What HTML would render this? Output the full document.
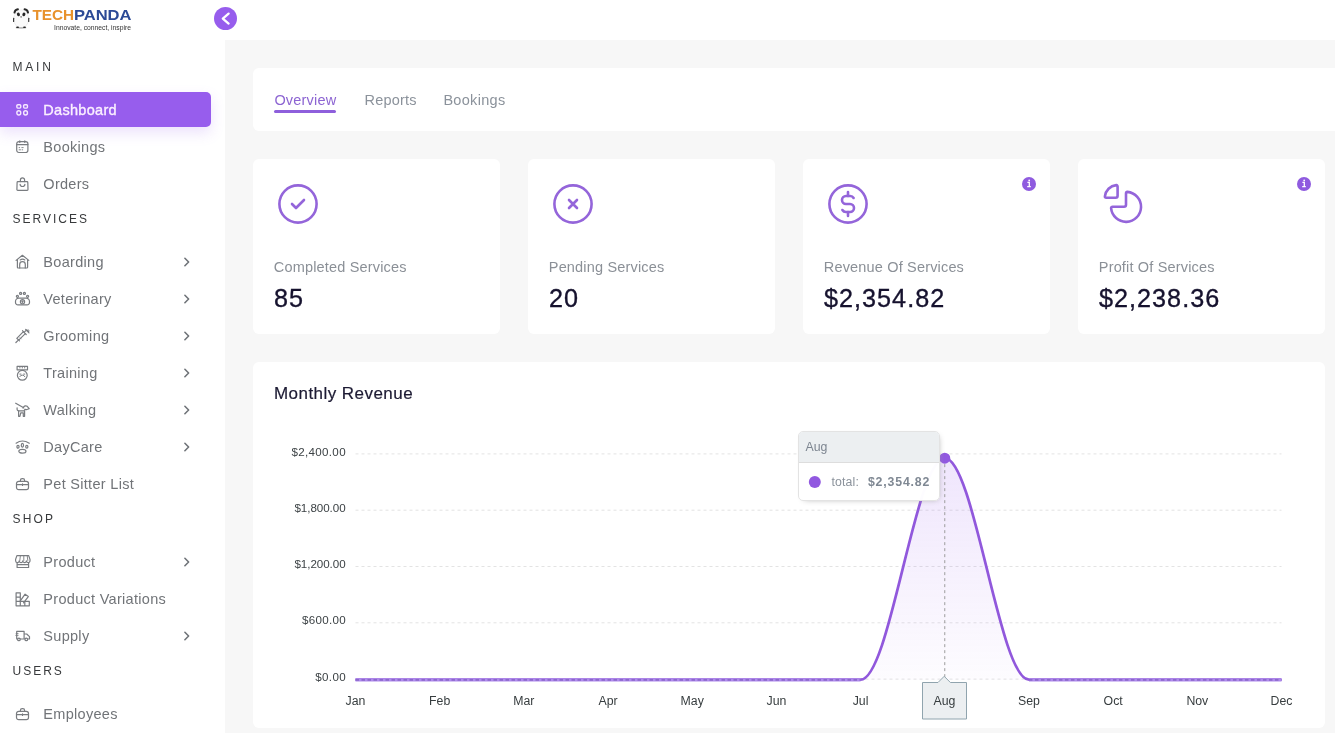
<!DOCTYPE html>
<html><head><meta charset="utf-8"><title>Dashboard</title><style>
*{margin:0;padding:0;box-sizing:border-box}
html,body{width:1335px;height:733px;overflow:hidden;background:#fff;font-family:"Liberation Sans", sans-serif}
.sidebar{position:absolute;left:0;top:0;width:225px;height:733px;background:#fff}
.topbar{position:absolute;left:225px;top:0;width:1110px;height:40px;background:#fff}
.main{position:absolute;left:225px;top:40px;width:1110px;height:693px;background:#f7f7f7}
.card{position:absolute;background:#fff;border-radius:6px}
.active{position:absolute;left:0;top:92px;width:211px;height:35px;background:#975ded;border-radius:0 5px 5px 0;box-shadow:0 6px 14px rgba(151,93,237,0.18)}
.toggle{position:absolute;left:214px;top:7px;width:23px;height:23px;border-radius:50%;background:#975ded}
svg.ov{position:absolute;left:0;top:0;width:1335px;height:733px;will-change:transform}
svg text{font-family:"Liberation Sans", sans-serif}
</style></head>
<body>
<div class="sidebar"></div>
<div class="topbar"></div>
<div class="main"></div>
<div class="card" style="left:253px;top:68px;width:1100px;height:63px"></div>
<div class="card" style="left:253px;top:159px;width:247px;height:175px"></div>
<div class="card" style="left:528px;top:159px;width:247px;height:175px"></div>
<div class="card" style="left:803px;top:159px;width:247px;height:175px"></div>
<div class="card" style="left:1078px;top:159px;width:247px;height:175px"></div>
<div class="card" style="left:253px;top:362px;width:1072px;height:366px"></div>
<div class="active"></div>
<div class="toggle"></div>
<svg class="ov" viewBox="0 0 1335 733"><text x="12.5" y="70.9" font-size="12" fill="#37393b" font-weight="400" letter-spacing="2.8" text-anchor="start" >MAIN</text><text x="12.5" y="222.9" font-size="12" fill="#37393b" font-weight="400" letter-spacing="2.0" text-anchor="start" >SERVICES</text><text x="12.5" y="523.2" font-size="12" fill="#37393b" font-weight="400" letter-spacing="2.2" text-anchor="start" >SHOP</text><text x="12.5" y="675.4" font-size="12" fill="#37393b" font-weight="400" letter-spacing="2.0" text-anchor="start" >USERS</text><text x="43.3" y="115" font-size="14.5" fill="#fbf0ff" font-weight="400" letter-spacing="0.3" text-anchor="start" stroke="#fbf0ff" stroke-width="0.35">Dashboard</text><g transform="translate(15.5,103)" fill="none" stroke="#f6e9ff" stroke-width="1.4" stroke-linecap="round" stroke-linejoin="round"><rect x="1.35" y="1.8" width="3.9" height="3.3" rx="1"/><rect x="8.15" y="1.8" width="3.8" height="3.3" rx="1"/><rect x="1.35" y="7.8" width="3.9" height="4.2" rx="1.95"/><rect x="8.15" y="7.8" width="3.8" height="4.2" rx="1.9"/></g><text x="43.3" y="152" font-size="14.5" fill="#717478" font-weight="400" letter-spacing="0.3" text-anchor="start" >Bookings</text><g transform="translate(15.5,140)" fill="none" stroke="#797c80" stroke-width="1.2" stroke-linecap="round" stroke-linejoin="round"><rect x="1.2" y="1.6" width="11.2" height="10.9" rx="2.2"/><path d="M1.2 4.6h11.2M4.3 0.8v1.6M9.3 0.8v1.6"/><path d="M3.6 7.6h0.6M6.3 7.6h1.4M3.6 9.8h1.4M6.6 9.8h0.6" stroke-width="0.9"/></g><text x="43.3" y="189" font-size="14.5" fill="#717478" font-weight="400" letter-spacing="0.3" text-anchor="start" >Orders</text><g transform="translate(15.5,177)" fill="none" stroke="#797c80" stroke-width="1.2" stroke-linecap="round" stroke-linejoin="round"><path d="M2.4 4.6h9.1a0.8 0.8 0 0 1 0.8 0.8l0.2 7.2a0.8 0.8 0 0 1 -0.8 0.8h-9.5a0.8 0.8 0 0 1 -0.8 -0.8l0.2 -7.2a0.8 0.8 0 0 1 0.8 -0.8z"/><path d="M4.9 4.6v-1.6a2.1 2.1 0 0 1 4.2 0v1.6M4.6 7.3a2.4 2.2 0 0 0 4.8 0"/></g><text x="43.3" y="267" font-size="14.5" fill="#717478" font-weight="400" letter-spacing="0.3" text-anchor="start" >Boarding</text><g transform="translate(15.5,255)" fill="none" stroke="#797c80" stroke-width="1.2" stroke-linecap="round" stroke-linejoin="round"><path d="M0.6 5.4l6.3-5.1l6.4 5.1M1.9 4.6v7.6a0.8 0.8 0 0 0 0.8 0.8h8.6a0.8 0.8 0 0 0 0.8-0.8v-7.6"/><path d="M4.2 12.9v-3.4a2.8 2.8 0 0 1 5.6 0v3.4"/><path d="M4.7 4.9a3.3 2 0 0 1 4.6 0"/></g><path d="M184.9 258.3l3.7 3.7l-3.7 3.7" fill="none" stroke="#6f7378" stroke-width="1.6" stroke-linecap="round" stroke-linejoin="round"/><text x="43.3" y="304" font-size="14.5" fill="#717478" font-weight="400" letter-spacing="0.3" text-anchor="start" >Veterinary</text><g transform="translate(15.5,292)" fill="none" stroke="#797c80" stroke-width="1.2" stroke-linecap="round" stroke-linejoin="round"><circle cx="5.1" cy="1.4" r="1.05"/><circle cx="8.9" cy="1.4" r="1.05"/><circle cx="1.9" cy="4.3" r="1.05"/><circle cx="12.1" cy="4.3" r="1.05"/><path d="M3.3 6.2h7.4a3.3 3.3 0 0 1 3.3 3.3v1a2.4 2.4 0 0 1 -2.4 2.4h-9.2a2.4 2.4 0 0 1 -2.4 -2.4v-1a3.3 3.3 0 0 1 3.3 -3.3z"/><circle cx="7" cy="9.7" r="2.1"/><path d="M7 8.8v1.8M6.1 9.7h1.8" stroke-width="0.9"/></g><path d="M184.9 295.3l3.7 3.7l-3.7 3.7" fill="none" stroke="#6f7378" stroke-width="1.6" stroke-linecap="round" stroke-linejoin="round"/><text x="43.3" y="341" font-size="14.5" fill="#717478" font-weight="400" letter-spacing="0.3" text-anchor="start" >Grooming</text><g transform="translate(15.5,329)" fill="none" stroke="#797c80" stroke-width="1.2" stroke-linecap="round" stroke-linejoin="round"><path d="M0.4 13.5l2.2-2.2M2.1 9.9l1.9 1.9M3.2 11.2l6.6-6.6l-1.9-1.9l-6.6 6.6z" /><path d="M7.9 2.6l-0.9-0.9M9.8 4.6l0.9 0.9M8.6 3.4l2.5-2.5M10.2 0.5l3.3 3.3M11.7 1.8l0.9-0.9M12.6 2.8l0.9-0.9"/><path d="M4.5 8.7l1.2 1.2" stroke-width="0.8"/></g><path d="M184.9 332.3l3.7 3.7l-3.7 3.7" fill="none" stroke="#6f7378" stroke-width="1.6" stroke-linecap="round" stroke-linejoin="round"/><text x="43.3" y="378" font-size="14.5" fill="#717478" font-weight="400" letter-spacing="0.3" text-anchor="start" >Training</text><g transform="translate(15.5,366)" fill="none" stroke="#797c80" stroke-width="1.2" stroke-linecap="round" stroke-linejoin="round"><path d="M1.6 0.4h10.4v3.4h-10.4z"/><path d="M4.4 0.4v1.6M6.8 0.4v1.6M9.2 0.4v1.6" stroke-width="0.9"/><circle cx="6.8" cy="9.3" r="4.9"/><path d="M4.3 10.6a2.6 2 0 0 1 5 0M4.3 8.1h1.2M8.1 8.1h1.2" stroke-width="1"/></g><path d="M184.9 369.3l3.7 3.7l-3.7 3.7" fill="none" stroke="#6f7378" stroke-width="1.6" stroke-linecap="round" stroke-linejoin="round"/><text x="43.3" y="415" font-size="14.5" fill="#717478" font-weight="400" letter-spacing="0.3" text-anchor="start" >Walking</text><g transform="translate(15.5,403)" fill="none" stroke="#797c80" stroke-width="1.2" stroke-linecap="round" stroke-linejoin="round"><path d="M0.2 0.2l8 4.6"/><path d="M1.6 4.8v1.5a1.5 1.5 0 0 0 1.5 1.5h5.4l1-1.6a2 2 0 0 0 1.9 0.3l2.3-0.8l-2-2.4a2.3 2.3 0 0 0 -3.3 0.4l-0.9 1.3"/><path d="M3.1 7.8v5.5h1.3l0.8-3.5h2.6v3.5h1.3v-5.5"/></g><path d="M184.9 406.3l3.7 3.7l-3.7 3.7" fill="none" stroke="#6f7378" stroke-width="1.6" stroke-linecap="round" stroke-linejoin="round"/><text x="43.3" y="452" font-size="14.5" fill="#717478" font-weight="400" letter-spacing="0.3" text-anchor="start" >DayCare</text><g transform="translate(15.5,440)" fill="none" stroke="#797c80" stroke-width="1.2" stroke-linecap="round" stroke-linejoin="round"><path d="M0.6 3.2q6.2-4.4 13.2 0"/><ellipse cx="6.9" cy="5.2" rx="1.1" ry="1.9"/><ellipse cx="2.5" cy="6.8" rx="1.1" ry="1.4"/><ellipse cx="11.3" cy="6.8" rx="1.1" ry="1.4"/><ellipse cx="6.9" cy="11.3" rx="3.6" ry="1.9"/></g><path d="M184.9 443.3l3.7 3.7l-3.7 3.7" fill="none" stroke="#6f7378" stroke-width="1.6" stroke-linecap="round" stroke-linejoin="round"/><text x="43.3" y="489" font-size="14.5" fill="#717478" font-weight="400" letter-spacing="0.3" text-anchor="start" >Pet Sitter List</text><g transform="translate(15.5,477)" fill="none" stroke="#797c80" stroke-width="1.2" stroke-linecap="round" stroke-linejoin="round"><path d="M3.2 4.4h7.6a2.2 2.2 0 0 1 2.2 2.2v3.9a2.2 2.2 0 0 1 -2.2 2.2h-7.6a2.2 2.2 0 0 1 -2.2 -2.2v-3.9a2.2 2.2 0 0 1 2.2 -2.2z"/><path d="M4.9 4.4v-1a1.8 1.8 0 0 1 1.8-1.8h0.6a1.8 1.8 0 0 1 1.8 1.8v1M1 7.6h12M7 6.9v1.5"/></g><text x="43.3" y="567" font-size="14.5" fill="#717478" font-weight="400" letter-spacing="0.3" text-anchor="start" >Product</text><g transform="translate(15.5,555)" fill="none" stroke="#797c80" stroke-width="1.2" stroke-linecap="round" stroke-linejoin="round"><path d="M1.4 0.6h11.8l1.3 3.8v1.4a1.8 1.8 0 0 1 -3.6 0a1.8 1.8 0 0 1 -3.6 0a1.8 1.8 0 0 1 -3.6 0a1.8 1.8 0 0 1 -3.6 0v-1.4z"/><path d="M4.9 0.6l-0.6 4.9M8.3 0.6v4.9M11.7 0.6l0.6 4.9" stroke-width="0.9"/><path d="M1.6 7.6v4.9h11.5v-4.9M1.6 9.6h11.5" /></g><path d="M184.9 558.3l3.7 3.7l-3.7 3.7" fill="none" stroke="#6f7378" stroke-width="1.6" stroke-linecap="round" stroke-linejoin="round"/><text x="43.3" y="604" font-size="14.5" fill="#717478" font-weight="400" letter-spacing="0.3" text-anchor="start" >Product Variations</text><g transform="translate(15.5,592)" fill="none" stroke="#797c80" stroke-width="1.2" stroke-linecap="round" stroke-linejoin="round"><path d="M0.6 0.8h4.2v13h-4.2zM0.6 5.1h4.2M0.6 9.4h4.2M4.8 9.4h9v4.4h-9M9.3 9.4v4.4"/><path d="M4.8 8.8l4.8-6.6l3.2 2.4l-4.8 6.2"/></g><text x="43.3" y="641" font-size="14.5" fill="#717478" font-weight="400" letter-spacing="0.3" text-anchor="start" >Supply</text><g transform="translate(15.5,629)" fill="none" stroke="#797c80" stroke-width="1.2" stroke-linecap="round" stroke-linejoin="round"><path d="M1.2 2.4h7.4v7.6h-7.4zM8.6 5h2.6l2.8 2.6v2.4h-5.4"/><circle cx="3.4" cy="10.4" r="1.3" fill="#fff"/><circle cx="10.8" cy="10.4" r="1.3" fill="#fff"/><path d="M0.6 4.6h2M0.3 6.4h2.3" stroke-width="0.9"/></g><path d="M184.9 632.3l3.7 3.7l-3.7 3.7" fill="none" stroke="#6f7378" stroke-width="1.6" stroke-linecap="round" stroke-linejoin="round"/><text x="43.3" y="719" font-size="14.5" fill="#717478" font-weight="400" letter-spacing="0.3" text-anchor="start" >Employees</text><g transform="translate(15.5,707)" fill="none" stroke="#797c80" stroke-width="1.2" stroke-linecap="round" stroke-linejoin="round"><path d="M3.2 4.4h7.6a2.2 2.2 0 0 1 2.2 2.2v3.9a2.2 2.2 0 0 1 -2.2 2.2h-7.6a2.2 2.2 0 0 1 -2.2 -2.2v-3.9a2.2 2.2 0 0 1 2.2 -2.2z"/><path d="M4.9 4.4v-1a1.8 1.8 0 0 1 1.8-1.8h0.6a1.8 1.8 0 0 1 1.8 1.8v1M1 7.6h12M7 6.9v1.5"/></g><text x="274.4" y="104.7" font-size="14.5" fill="#8c64d2" font-weight="400" letter-spacing="0.2" text-anchor="start" >Overview</text><text x="364.5" y="104.7" font-size="14.5" fill="#8b929b" font-weight="400" letter-spacing="0.2" text-anchor="start" >Reports</text><text x="443.4" y="104.7" font-size="14.5" fill="#8b929b" font-weight="400" letter-spacing="0.3" text-anchor="start" >Bookings</text><rect x="274" y="110" width="62" height="3" rx="1.5" fill="#8e5fdc"/><text x="273.8" y="271.8" font-size="14.5" fill="#8b9097" font-weight="400" letter-spacing="0.17" text-anchor="start" >Completed Services</text><text x="274.1" y="306.6" font-size="25.2" fill="#16122e" font-weight="400" letter-spacing="1.0" text-anchor="start" stroke="#16122e" stroke-width="0.35">85</text><g transform="translate(274,180) scale(2)" fill="none" stroke="#9465da" stroke-width="1.3" stroke-linecap="round" stroke-linejoin="round"><circle cx="12" cy="12" r="9.3"/><path d="M9 12l2 2l4-4"/></g><text x="548.8" y="271.8" font-size="14.5" fill="#8b9097" font-weight="400" letter-spacing="0.17" text-anchor="start" >Pending Services</text><text x="549.1" y="306.6" font-size="25.2" fill="#16122e" font-weight="400" letter-spacing="1.0" text-anchor="start" stroke="#16122e" stroke-width="0.35">20</text><g transform="translate(549,180) scale(2)" fill="none" stroke="#9465da" stroke-width="1.3" stroke-linecap="round" stroke-linejoin="round"><circle cx="12" cy="12" r="9.3"/><path d="M10 10l4 4m0-4l-4 4"/></g><text x="823.8" y="271.8" font-size="14.5" fill="#8b9097" font-weight="400" letter-spacing="0.17" text-anchor="start" >Revenue Of Services</text><text x="824.1" y="306.6" font-size="25.2" fill="#16122e" font-weight="400" letter-spacing="1.0" text-anchor="start" stroke="#16122e" stroke-width="0.35">$2,354.82</text><g transform="translate(824,180) scale(2)" fill="none" stroke="#9465da" stroke-width="1.3" stroke-linecap="round" stroke-linejoin="round"><circle cx="12" cy="12" r="9.3"/><path d="M14.8 9a2 2 0 0 0 -1.8 -1h-2a2 2 0 1 0 0 4h2a2 2 0 1 1 0 4h-2a2 2 0 0 1 -1.8 -1"/><path d="M12 6v2m0 8v2"/></g><circle cx="1029" cy="184" r="7" fill="#8f5bdf"/><path d="M1027.4 182.3h1.9v4.2M1027.2 186.6h3.6" stroke="#fff" stroke-width="1.3" fill="none"/><circle cx="1029.2" cy="180.4" r="0.9" fill="#fff"/><text x="1098.8" y="271.8" font-size="14.5" fill="#8b9097" font-weight="400" letter-spacing="0.17" text-anchor="start" >Profit Of Services</text><text x="1099.1" y="306.6" font-size="25.2" fill="#16122e" font-weight="400" letter-spacing="1.0" text-anchor="start" stroke="#16122e" stroke-width="0.35">$2,238.36</text><g transform="translate(1099,180) scale(2)" fill="none" stroke="#9465da" stroke-width="1.3" stroke-linecap="round" stroke-linejoin="round"><path d="M9.3 3.4V7.9Q9.3 8.9 8.3 8.9H3.6Q2.9 8.9 2.95 8.2A6.4 6.4 0 0 1 8.6 2.55Q9.3 2.5 9.3 3.4Z"/><path d="M13.5 6.7V12.4Q13.5 13.4 12.5 13.4H6.8Q6 13.4 6.05 14.1A7.5 7.5 0 1 0 14.2 5.95Q13.5 5.9 13.5 6.7Z"/></g><circle cx="1304" cy="184" r="7" fill="#8f5bdf"/><path d="M1302.4 182.3h1.9v4.2M1302.2 186.6h3.6" stroke="#fff" stroke-width="1.3" fill="none"/><circle cx="1304.2" cy="180.4" r="0.9" fill="#fff"/><text x="274.0" y="398.7" font-size="17" fill="#1c1a33" font-weight="400" letter-spacing="0.45" text-anchor="start" stroke="#1c1a33" stroke-width="0.2">Monthly Revenue</text><line x1="355.5" y1="453.9" x2="1281.5" y2="453.9" stroke="#e3e3e3" stroke-width="1" stroke-dasharray="3 3"/><text x="345.6" y="455.5" font-size="11.6" fill="#3c4245" font-weight="400" letter-spacing="0" text-anchor="end" textLength="54.2" lengthAdjust="spacing">$2,400.00</text><line x1="355.5" y1="510.2" x2="1281.5" y2="510.2" stroke="#e3e3e3" stroke-width="1" stroke-dasharray="3 3"/><text x="345.6" y="511.8" font-size="11.6" fill="#3c4245" font-weight="400" letter-spacing="0" text-anchor="end" textLength="51.2" lengthAdjust="spacing">$1,800.00</text><line x1="355.5" y1="566.5" x2="1281.5" y2="566.5" stroke="#e3e3e3" stroke-width="1" stroke-dasharray="3 3"/><text x="345.6" y="568.1" font-size="11.6" fill="#3c4245" font-weight="400" letter-spacing="0" text-anchor="end" textLength="51.2" lengthAdjust="spacing">$1,200.00</text><line x1="355.5" y1="622.8" x2="1281.5" y2="622.8" stroke="#e3e3e3" stroke-width="1" stroke-dasharray="3 3"/><text x="345.6" y="624.4" font-size="11.6" fill="#3c4245" font-weight="400" letter-spacing="0" text-anchor="end" textLength="43.6" lengthAdjust="spacing">$600.00</text><line x1="355.5" y1="679.1" x2="1281.5" y2="679.1" stroke="#e3e3e3" stroke-width="1" stroke-dasharray="3 3"/><text x="345.6" y="680.7" font-size="11.6" fill="#3c4245" font-weight="400" letter-spacing="0" text-anchor="end" textLength="30.3" lengthAdjust="spacing">$0.00</text><text x="355.5" y="704.8" font-size="12.3" fill="#373d3f" font-weight="400" letter-spacing="0" text-anchor="middle" >Jan</text><text x="439.6818181818182" y="704.8" font-size="12.3" fill="#373d3f" font-weight="400" letter-spacing="0" text-anchor="middle" >Feb</text><text x="523.8636363636364" y="704.8" font-size="12.3" fill="#373d3f" font-weight="400" letter-spacing="0" text-anchor="middle" >Mar</text><text x="608.0454545454545" y="704.8" font-size="12.3" fill="#373d3f" font-weight="400" letter-spacing="0" text-anchor="middle" >Apr</text><text x="692.2272727272727" y="704.8" font-size="12.3" fill="#373d3f" font-weight="400" letter-spacing="0" text-anchor="middle" >May</text><text x="776.409090909091" y="704.8" font-size="12.3" fill="#373d3f" font-weight="400" letter-spacing="0" text-anchor="middle" >Jun</text><text x="860.5909090909091" y="704.8" font-size="12.3" fill="#373d3f" font-weight="400" letter-spacing="0" text-anchor="middle" >Jul</text><text x="944.7727272727273" y="704.8" font-size="12.3" fill="#373d3f" font-weight="400" letter-spacing="0" text-anchor="middle" >Aug</text><text x="1028.9545454545455" y="704.8" font-size="12.3" fill="#373d3f" font-weight="400" letter-spacing="0" text-anchor="middle" >Sep</text><text x="1113.1363636363637" y="704.8" font-size="12.3" fill="#373d3f" font-weight="400" letter-spacing="0" text-anchor="middle" >Oct</text><text x="1197.318181818182" y="704.8" font-size="12.3" fill="#373d3f" font-weight="400" letter-spacing="0" text-anchor="middle" >Nov</text><text x="1281.5" y="704.8" font-size="12.3" fill="#373d3f" font-weight="400" letter-spacing="0" text-anchor="middle" >Dec</text><defs><linearGradient id="ag" x1="0" y1="0" x2="0" y2="1"><stop offset="0" stop-color="#9b5fee" stop-opacity="0.16"/><stop offset="1" stop-color="#9b5fee" stop-opacity="0.02"/></linearGradient></defs><path d="M355.50 679.70 C384.96 679.70 410.22 679.70 439.68 679.70 C469.15 679.70 494.40 679.70 523.86 679.70 C553.33 679.70 578.58 679.70 608.05 679.70 C637.51 679.70 662.76 679.70 692.23 679.70 C721.69 679.70 746.95 679.70 776.41 679.70 C805.87 679.70 831.13 679.70 860.59 679.70 C890.05 679.70 915.31 458.15 944.77 458.15 C974.24 458.15 999.49 679.70 1028.95 679.70 C1058.42 679.70 1083.67 679.70 1113.14 679.70 C1142.60 679.70 1167.85 679.70 1197.32 679.70 C1226.78 679.70 1252.04 679.70 1281.50 679.70 L1281.50 679.7 L355.50 679.7 Z" fill="url(#ag)"/><path d="M355.50 679.70 C384.96 679.70 410.22 679.70 439.68 679.70 C469.15 679.70 494.40 679.70 523.86 679.70 C553.33 679.70 578.58 679.70 608.05 679.70 C637.51 679.70 662.76 679.70 692.23 679.70 C721.69 679.70 746.95 679.70 776.41 679.70 C805.87 679.70 831.13 679.70 860.59 679.70 C890.05 679.70 915.31 458.15 944.77 458.15 C974.24 458.15 999.49 679.70 1028.95 679.70 C1058.42 679.70 1083.67 679.70 1113.14 679.70 C1142.60 679.70 1167.85 679.70 1197.32 679.70 C1226.78 679.70 1252.04 679.70 1281.50 679.70" fill="none" stroke="#9158dc" stroke-width="2.7" stroke-linecap="butt"/><line x1="355.50" y1="679.9" x2="860.59" y2="679.9" stroke="#ae8aec" stroke-width="3"/><line x1="355.50" y1="679.9" x2="860.59" y2="679.9" stroke="#7a55bb" stroke-width="1.8" stroke-dasharray="3.5 2.5" stroke-opacity="0.65"/><line x1="1028.95" y1="679.9" x2="1281.50" y2="679.9" stroke="#ae8aec" stroke-width="3"/><line x1="1028.95" y1="679.9" x2="1281.50" y2="679.9" stroke="#7a55bb" stroke-width="1.8" stroke-dasharray="3.5 2.5" stroke-opacity="0.65"/><line x1="944.77" y1="458.15" x2="944.77" y2="679" stroke="#9c9c9c" stroke-width="1" stroke-dasharray="3 3"/><circle cx="944.77" cy="458.15" r="5.5" fill="#9158e0"/><path d="M922.5 682.5h15.5l6.2-6.2l6.2 6.2h16.1v36.5h-44z" fill="#eceff1" stroke="#90a4ae" stroke-width="1" stroke-linejoin="round"/><text x="944.5" y="704.8" font-size="12.3" fill="#373d3f" font-weight="400" letter-spacing="0" text-anchor="middle" >Aug</text><text x="32.4" y="20.4" font-size="14.6" font-weight="700" fill="#e8922c" textLength="41.6" lengthAdjust="spacingAndGlyphs">TECH</text><text x="73.9" y="20.4" font-size="14.6" font-weight="700" fill="#2c4a96" textLength="57.6" lengthAdjust="spacingAndGlyphs">PANDA</text><text x="54" y="29.6" font-size="6.3" fill="#333" textLength="77" lengthAdjust="spacingAndGlyphs">Innovate, connect, inspire</text><ellipse cx="21.2" cy="19" rx="7.4" ry="9.2" fill="#fafafa" stroke="#e4e4e4" stroke-width="0.6"/><path d="M14.5 12.6A4 4 0 0 1 17.9 9.3" fill="none" stroke="#2a2a2a" stroke-width="2" stroke-linecap="round"/><path d="M28 12.6A4 4 0 0 0 24.6 9.3" fill="none" stroke="#2a2a2a" stroke-width="2" stroke-linecap="round"/><ellipse cx="18.4" cy="14.4" rx="1.5" ry="1.9" transform="rotate(-25 18.4 14.4)" fill="#262626"/><ellipse cx="23.9" cy="14.4" rx="1.5" ry="1.9" transform="rotate(25 23.9 14.4)" fill="#262626"/><circle cx="21.1" cy="16.9" r="0.8" fill="#777"/><rect x="13" y="17.8" width="1.2" height="4.3" rx="0.5" fill="#3a3a3a"/><rect x="28.1" y="17.8" width="1.2" height="4.3" rx="0.5" fill="#3a3a3a"/><ellipse cx="21" cy="27.8" rx="5.5" ry="0.9" fill="#bbb"/><ellipse cx="17.6" cy="27.3" rx="1.6" ry="0.8" fill="#222"/><ellipse cx="24.5" cy="27.3" rx="1.6" ry="0.8" fill="#222"/><path d="M228.6 13.6L222.8 18.6L228.6 23.6" fill="none" stroke="#fff" stroke-width="2.3" stroke-linecap="round" stroke-linejoin="round"/></svg>
<div style="position:absolute;left:798px;top:431px;width:142px;height:70px;background:rgba(255,255,255,0.985);border:1px solid #e3e3e3;border-radius:5px;box-shadow:2px 2px 6px -4px #999;overflow:hidden">
<div style="height:31px;background:#eceff1;border-bottom:1px solid #ddd"></div></div>
<svg class="ov" viewBox="0 0 1335 733"><text x="805.5" y="450.9" font-size="12.3" fill="#7d8590">Aug</text><circle cx="814.8" cy="482" r="6" fill="#9158e0"/><text x="831.4" y="485.8" font-size="12.3" fill="#8b929b" letter-spacing="0.15">total:</text><text x="867.9" y="486" font-size="12.3" font-weight="700" fill="#7f8893" letter-spacing="0.85">$2,354.82</text></svg>
</body></html>
